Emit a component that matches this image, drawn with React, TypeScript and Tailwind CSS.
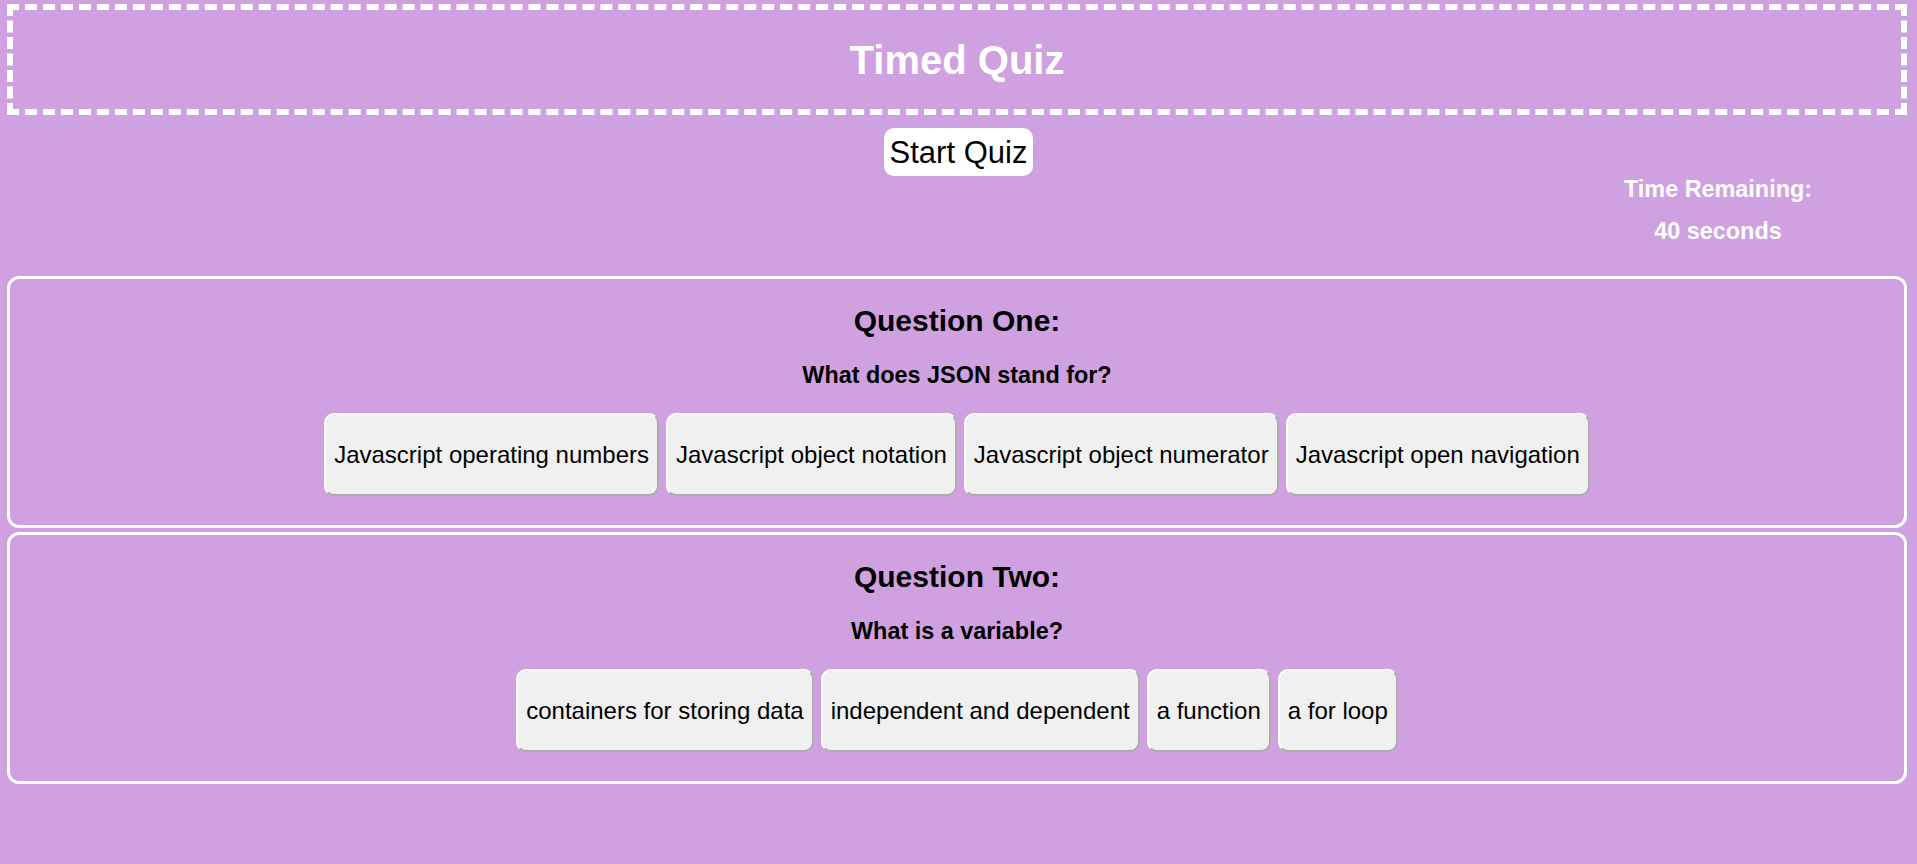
const questions = [
  {
    title: "Question One:",
    prompt: "What does JSON stand for?",
    answers: [
      "Javascript operating numbers",
      "Javascript object notation",
      "Javascript object numerator",
      "Javascript open navigation",
    ],
  },
  {
    title: "Question Two:",
    prompt: "What is a variable?",
    answers: [
      "containers for storing data",
      "independent and dependent",
      "a function",
      "a for loop",
    ],
  },
];

export default function App() {
  return (
    <div className="min-h-[864px] bg-[#cfa1e0] pt-[4px] font-['Liberation_Sans',Arial,sans-serif]">
      {/* Header */}
      <header className="ml-[7px] w-[1900px] h-[111px] border-[6px] border-dashed border-white flex items-center justify-center">
        <h1 className="text-[40px] leading-[46px] font-bold text-white">Timed Quiz</h1>
      </header>

      <div className="mt-[13px] flex justify-center">
        <button className="h-[48px] px-[6px] bg-white rounded-[10px] text-[31px] leading-[35px] text-black">
          Start Quiz
        </button>
      </div>

      {/* Timer */}
      <div className="flex justify-end pr-[49px]">
        <div className="w-[300px] text-center text-white font-bold text-[23.4px] leading-[27px]">
          <p>Time Remaining:</p>
          <p className="mt-[15px]">40 seconds</p>
        </div>
      </div>

      {/* Questions */}
      <div className="mt-[31px] flex flex-col gap-[4px]">
        {questions.map((q) => (
          <section
            key={q.title}
            className="ml-[7px] w-[1900px] h-[252px] border-[3px] border-white rounded-[12px] pt-[25px] flex flex-col items-center"
          >
            <h2 className="text-[30px] leading-[34px] font-bold text-black">{q.title}</h2>
            <h3 className="mt-[24px] text-[23.4px] leading-[27px] font-bold text-black">{q.prompt}</h3>
            <div className="mt-[24px] flex gap-[7px]">
              {q.answers.map((a) => (
                <button
                  key={a}
                  className="h-[83px] px-[8px] bg-[#f0f0f0] rounded-[10px] border-[2px] border-white border-r-[#adadad] border-b-[#adadad] text-[24px] leading-[28px] text-black"
                >
                  {a}
                </button>
              ))}
            </div>
          </section>
        ))}
      </div>
    </div>
  );
}
